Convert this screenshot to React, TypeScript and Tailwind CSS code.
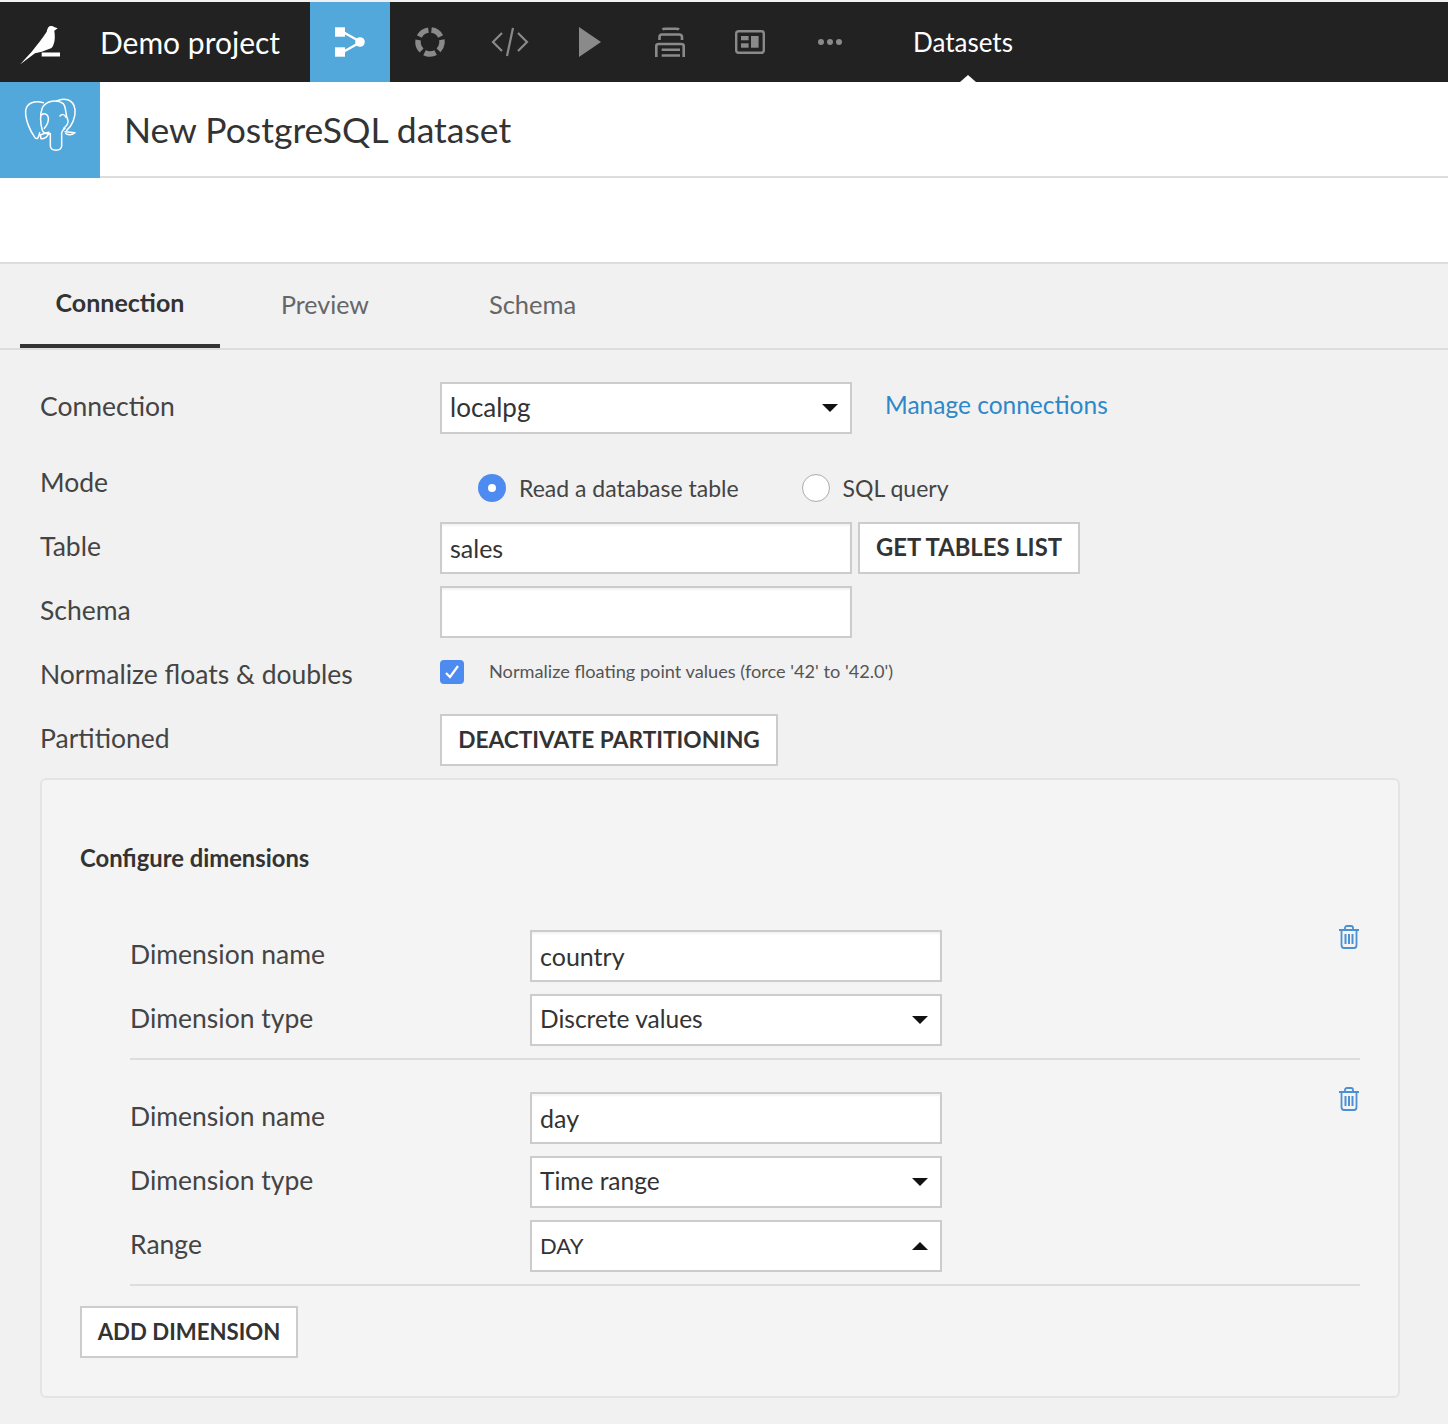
import type { ReactNode } from "react"

const font = "font-['Lato','Noto_Sans',sans-serif]"

function BirdLogo() {
  return (
    <svg width="44" height="44" viewBox="0 0 44 44" fill="#fff">
      <path d="M2 44.5 L13.7 31.7 C19 25 24 19 28.7 11.7 C29.5 8 30.5 6 33 6 C34.5 6 35.3 6.2 36 7 L39.7 8.3 L36.3 10.7 C37 15 37 20 36 23 C35 26 34.5 27.5 33 28.3 L23.7 31.7 L17 33.3 Z" />
      <rect x="23.7" y="32.5" width="18.3" height="4" />
    </svg>
  )
}

function ElephantIcon() {
  return (
    <svg width="70" height="70" viewBox="0 0 210 210" fill="none" stroke="#fff" strokeWidth="4.5" strokeLinecap="round" strokeLinejoin="round">
      <path d="M85 35 C60 28 35 35 32 58 C30 85 45 120 60 140 C66 147 72 140 74 125" />
      <path d="M145 38 C125 25 95 28 82 50 C74 70 76 100 82 118 C86 128 96 130 106 128" />
      <path d="M145 38 C155 50 150 70 158 85 C162 95 155 105 146 112" />
      <path d="M125 30 C145 20 175 22 180 55 C183 80 170 105 155 118" />
      <path d="M106 128 L106 165 C108 182 138 182 140 165 L140 125 C140 118 146 115 150 112" />
      <path d="M76 132 C85 128 95 125 102 124 C100 135 90 145 78 143 Z" />
      <path d="M150 122 L180 125 C172 132 160 132 152 128" />
      <path d="M80 72 C85 66 98 68 100 80 C102 95 94 105 88 112" />
      <path d="M135 75 C140 68 150 70 152 78" />
    </svg>
  )
}

function FlowIcon() {
  return (
    <svg width="32" height="32" viewBox="0 0 32 32" fill="#fff">
      <rect x="1" y="1.3" width="10" height="9.4" />
      <rect x="1" y="21.3" width="10" height="9.4" />
      <circle cx="26" cy="16" r="4.8" />
      <path d="M9 6 L25 15 M9 26 L25 17" stroke="#fff" strokeWidth="2.4" fill="none" />
    </svg>
  )
}

function LabIcon() {
  return (
    <svg width="32" height="32" viewBox="0 0 32 32" fill="none" stroke="#8a8a8a" strokeWidth="5.5">
      <circle cx="16" cy="16" r="12" strokeDasharray="11.5 3.58" transform="rotate(-83 16 16)" />
    </svg>
  )
}

function CodeIcon() {
  return (
    <svg width="38" height="30" viewBox="0 0 38 30" fill="none" stroke="#8a8a8a" strokeWidth="2.2">
      <path d="M11 6 L2 15 L11 24 M27 6 L36 15 L27 24 M22 1 L16 29" />
    </svg>
  )
}

function PlayIcon() {
  return (
    <svg width="24" height="30" viewBox="0 0 24 30" fill="#8a8a8a">
      <path d="M1 0 L23 15 L1 30 Z" />
    </svg>
  )
}

function DeployIcon() {
  return (
    <svg width="32" height="32" viewBox="0 0 32 32" fill="none" stroke="#8a8a8a" strokeWidth="2.6">
      <path d="M8.5 3.5 C9 3 10 2.7 11 2.7 H22 C23 2.7 24.5 3 25 3.5" />
      <path d="M5.5 14 V11 C5.5 9 6.5 8.5 8 8.5 H25 C27 8.5 28 9 28 11 V14" />
      <path d="M2.3 31 V20 C2.3 18.5 3.5 18 5 18 H27 C28.5 18 29.7 18.5 29.7 20 V31" />
      <path d="M7.7 23.7 H26 M7.7 29.5 H26" />
    </svg>
  )
}

function DashboardIcon() {
  return (
    <svg width="30" height="24" viewBox="0 0 30 24" fill="none">
      <rect x="1.2" y="1.2" width="27.6" height="21.6" rx="2.5" stroke="#8a8a8a" strokeWidth="2.4" />
      <rect x="6" y="6" width="7.6" height="4.3" fill="#8a8a8a" />
      <rect x="6" y="13.3" width="7.6" height="4.4" fill="#8a8a8a" />
      <rect x="16" y="6" width="7.6" height="11.7" fill="#8a8a8a" />
    </svg>
  )
}

function TrashIcon() {
  return (
    <svg width="20" height="24" viewBox="0 0 20 24" fill="none" stroke="#4a90d2" strokeWidth="1.8">
      <path d="M0 5 H20 M6 5 V3 C6 1.5 7 1 8 1 H12 C13 1 14 1.5 14 3 V5" />
      <path d="M2.5 5 V20 C2.5 22 3.5 23 5 23 H15 C16.5 23 17.5 22 17.5 20 V5" />
      <path d="M6.5 9 V19 M10 9 V19 M13.5 9 V19" strokeWidth="2" />
    </svg>
  )
}

function NavIcon({ children }: { children: ReactNode }) {
  return <div className="flex h-20 w-20 items-center justify-center">{children}</div>
}

function FormLabel({ children }: { children: ReactNode }) {
  return <div className="flex h-[49px] items-center text-[26.5px] text-[#444]">{children}</div>
}

function TextBox({ value }: { value?: string }) {
  return (
    <div className="flex h-[52px] w-[412px] items-center border-2 border-[#ccc] bg-white px-2 pt-0.5 text-[25px] text-[#333] shadow-[inset_0_2px_2px_rgba(0,0,0,0.05)]">
      {value}
    </div>
  )
}

function SelectBox({ value, up, className }: { value: string; up?: boolean; className?: string }) {
  return (
    <div className={`flex h-[52px] w-[412px] items-center justify-between border-2 border-[#ccc] bg-white pr-[12px] pl-2 text-[#333] ${className ?? "text-[24.5px]"}`}>
      <span className="-translate-y-px">{value}</span>
      <svg width="16" height="8" viewBox="0 0 16 8" fill="#111">
        <path d={up ? "M0 8 L8 0 L16 8 Z" : "M0 0 L16 0 L8 8 Z"} />
      </svg>
    </div>
  )
}

function ActionButton({ children, className }: { children: ReactNode; className?: string }) {
  return (
    <div className={`flex h-[52px] items-center justify-center border-2 border-[#ccc] bg-white font-bold text-[#333] ${className ?? ""}`}>
      {children}
    </div>
  )
}

function FormRow({ label, children }: { label: string; children: ReactNode }) {
  return (
    <div className="flex h-16 items-start">
      <div className="w-[400px]">
        <FormLabel>{label}</FormLabel>
      </div>
      {children}
    </div>
  )
}

function DimensionBlock({ rows }: { rows: { label: string; box: ReactNode }[] }) {
  return (
    <div className="relative border-b-2 border-[#ddd]">
      {rows.map((r, i) => (
        <FormRow key={i} label={r.label}>
          {r.box}
        </FormRow>
      ))}
      <div className="absolute top-[-5px] right-[1px]">
        <TrashIcon />
      </div>
    </div>
  )
}

export default function App() {
  return (
    <div className={`h-[1424px] w-[1448px] overflow-hidden bg-[#f1f1f1] pt-0.5 ${font}`}>
      <nav className="flex h-20 items-center bg-[#222]">
        <div className="flex h-20 w-20 items-center justify-center">
          <BirdLogo />
        </div>
        <div className="ml-5 w-[210px] text-[30px] text-white">Demo project</div>
        <div className="flex h-20 w-20 items-center justify-center bg-[#52a7db]">
          <FlowIcon />
        </div>
        <NavIcon><LabIcon /></NavIcon>
        <NavIcon><CodeIcon /></NavIcon>
        <NavIcon><PlayIcon /></NavIcon>
        <NavIcon><DeployIcon /></NavIcon>
        <NavIcon><DashboardIcon /></NavIcon>
        <NavIcon>
          <div className="flex gap-[3px]">
            <span className="h-[6px] w-[6px] rounded-full bg-[#8a8a8a]" />
            <span className="h-[6px] w-[6px] rounded-full bg-[#8a8a8a]" />
            <span className="h-[6px] w-[6px] rounded-full bg-[#8a8a8a]" />
          </div>
        </NavIcon>
        <div className="relative ml-[43px] flex h-20 items-center text-[26px] text-white">
          Datasets
          <span className="absolute bottom-0 left-[47px] h-0 w-0 border-x-[8px] border-b-[7px] border-x-transparent border-b-white" />
        </div>
      </nav>

      <header className="flex h-24 items-stretch border-b-2 border-[#ddd] bg-white">
        <div className="mb-[-2px] flex h-24 w-[100px] items-center justify-center bg-[#52a7db] pb-2">
          <ElephantIcon />
        </div>
        <h1 className="ml-6 flex items-center pt-0.5 text-[35.5px] font-normal text-[#333]">New PostgreSQL dataset</h1>
      </header>

      <div className="h-[86px] border-b-2 border-[#ddd] bg-white" />

      <div className="flex h-[86px] border-b-2 border-[#ddd] pl-5">
        <div className="mb-[-2px] flex h-[84px] w-[200px] items-center justify-center border-b-4 border-[#333] pb-0.5 text-[25px] font-bold text-[#333]">
          Connection
        </div>
        <div className="ml-[61px] flex items-center pb-0.5 text-[25px] text-[#666]">Preview</div>
        <div className="ml-[120px] flex items-center pb-1 text-[25.5px] text-[#666]">Schema</div>
      </div>

      <div className="pt-8 pr-12 pl-10">
        <div className="flex h-[76px] items-start">
          <div className="w-[400px]">
            <FormLabel>Connection</FormLabel>
          </div>
          <SelectBox value="localpg" className="text-[26px]" />
          <a className="mt-[5px] ml-[33px] text-[24.5px] text-[#2d87c9]">Manage connections</a>
        </div>

        <FormRow label="Mode">
          <div className="ml-[38px] flex h-[60px] items-center text-[23px] text-[#444]">
            <span className="flex h-7 w-7 items-center justify-center rounded-full bg-[#4e8bf0]">
              <span className="h-2 w-2 rounded-full bg-white" />
            </span>
            <span className="ml-[13px]">Read a database table</span>
            <span className="ml-[63px] h-7 w-7 rounded-full border border-[#aaa] bg-white" />
            <span className="ml-[13px]">SQL query</span>
          </div>
        </FormRow>

        <FormRow label="Table">
          <TextBox value="sales" />
          <ActionButton className="ml-[6px] w-[222px] text-[23.8px]">GET TABLES LIST</ActionButton>
        </FormRow>

        <FormRow label="Schema">
          <TextBox />
        </FormRow>

        <FormRow label="Normalize floats & doubles">
          <div className="flex h-[44px] items-center">
            <span className="flex h-6 w-6 items-center justify-center rounded-[4px] bg-[#4e8bf0]">
              <svg width="16" height="14" viewBox="0 0 16 14" fill="none" stroke="#fff" strokeWidth="2.2">
                <path d="M2 8 L6 12 L14 1" />
              </svg>
            </span>
            <span className="ml-[25px] text-[18.2px] text-[#555]">Normalize floating point values (force '42' to '42.0')</span>
          </div>
        </FormRow>

        <FormRow label="Partitioned">
          <ActionButton className="w-[338px] text-[22.7px]">DEACTIVATE PARTITIONING</ActionButton>
        </FormRow>

        <section className="h-[620px] rounded-[6px] border-2 border-[#e4e4e4] bg-[#f4f4f4] px-[38px]">
          <h2 className="pt-[62px] text-[23.8px] leading-[32px] font-bold text-[#333]">Configure dimensions</h2>
          <div className="mt-[56px] ml-[50px]">
            <DimensionBlock
              rows={[
                { label: "Dimension name", box: <TextBox value="country" /> },
                { label: "Dimension type", box: <SelectBox value="Discrete values" /> },
              ]}
            />
            <div className="h-8" />
            <DimensionBlock
              rows={[
                { label: "Dimension name", box: <TextBox value="day" /> },
                { label: "Dimension type", box: <SelectBox value="Time range" /> },
                { label: "Range", box: <SelectBox value="DAY" up className="text-[22px]" /> },
              ]}
            />
          </div>
          <ActionButton className="mt-5 w-[218px] text-[22.2px]">ADD DIMENSION</ActionButton>
        </section>
      </div>
    </div>
  )
}
